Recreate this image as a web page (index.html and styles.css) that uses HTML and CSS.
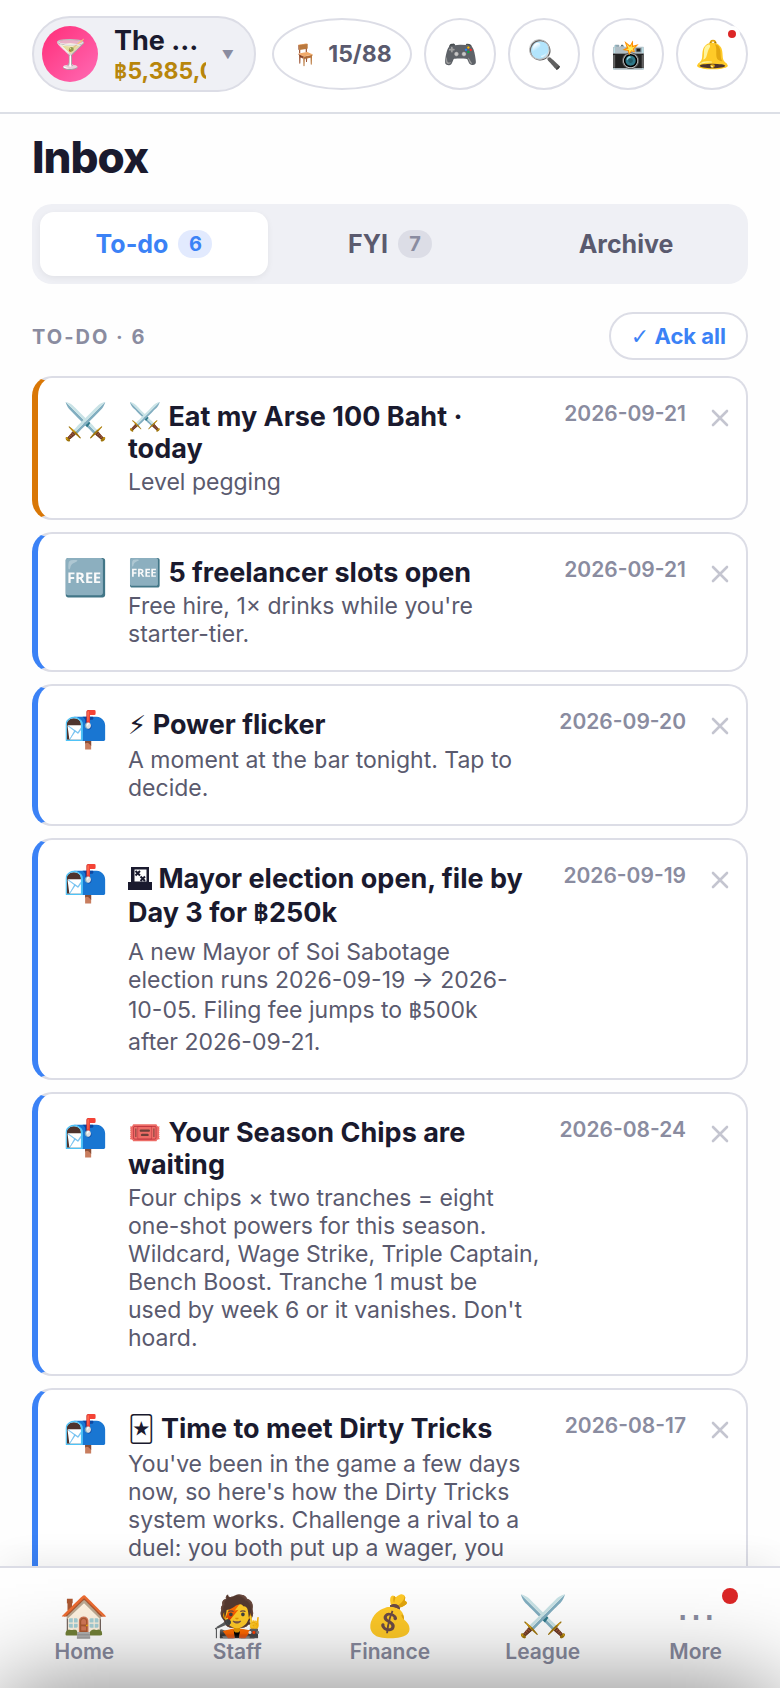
FILE: index.html
```html
<!DOCTYPE html>
<html lang="en">
<head>
<meta charset="utf-8">
<meta name="viewport" content="width=device-width, initial-scale=1">
<title>Inbox</title>
<link rel="stylesheet" href="styles.css">
</head>
<body>
<svg width="0" height="0" class="defs" aria-hidden="true">
  <symbol id="cross" viewBox="0 0 18 18"><path d="M2 2L16 16M16 2L2 16" fill="none" stroke="currentColor" stroke-width="2.6" stroke-linecap="round"/></symbol>
</svg>
<div class="app">
  <header class="topbar">
    <button class="profile" type="button">
      <span class="avatar">🍸</span>
      <span class="profile-text">
        <span class="profile-name">The Sabotage Bar</span>
        <span class="profile-cash"><span class="baht">฿</span>5,385,000</span>
      </span>
      <span class="caret">▼</span>
    </button>
    <div class="actions">
      <button class="pill seats" type="button"><span class="seat-icon">🪑</span>15/88</button>
      <button class="pill" type="button" aria-label="Games">🎮</button>
      <button class="pill" type="button" aria-label="Search">🔍</button>
      <button class="pill" type="button" aria-label="Camera">📸</button>
      <button class="pill" type="button" aria-label="Notifications">🔔<span class="bell-dot"></span></button>
    </div>
  </header>

  <main class="content">
    <h1 class="page-title">Inbox</h1>
    <div class="tabs" role="tablist">
      <button class="tab active" role="tab" aria-selected="true" type="button">To-do <span class="count">6</span></button>
      <button class="tab" role="tab" aria-selected="false" type="button">FYI <span class="count">7</span></button>
      <button class="tab" role="tab" aria-selected="false" type="button">Archive</button>
    </div>
    <div class="section-head">
      <h2 class="section-label">TO-DO · 6</h2>
      <button class="ack" type="button"><span class="tick">✓</span> Ack all</button>
    </div>

    <div class="cards">
      <article class="card urgent">
        <span class="card-icon">⚔️</span>
        <div class="card-main">
          <h3 class="card-title">⚔️ Eat my Arse 100 Baht ·<br>today</h3>
          <p class="card-body">Level pegging</p>
        </div>
        <time class="card-date">2026-09-21</time>
        <button class="close" type="button" aria-label="Dismiss"><svg><use href="#cross"/></svg></button>
      </article>
      <article class="card">
        <span class="card-icon">🆓</span>
        <div class="card-main">
          <h3 class="card-title">🆓 5 freelancer slots open</h3>
          <p class="card-body">Free hire, 1× drinks while you're starter-tier.</p>
        </div>
        <time class="card-date">2026-09-21</time>
        <button class="close" type="button" aria-label="Dismiss"><svg><use href="#cross"/></svg></button>
      </article>
      <article class="card">
        <span class="card-icon">📬</span>
        <div class="card-main">
          <h3 class="card-title"><span class="glyph">⚡</span> Power flicker</h3>
          <p class="card-body">A moment at the bar tonight. Tap to decide.</p>
        </div>
        <time class="card-date">2026-09-20</time>
        <button class="close" type="button" aria-label="Dismiss"><svg><use href="#cross"/></svg></button>
      </article>
      <article class="card">
        <span class="card-icon">📬</span>
        <div class="card-main">
          <h3 class="card-title"><svg class="ballot" viewBox="0 0 24 24" role="img" aria-label="Ballot box"><path d="M3 0H21V15H24V23H0V15H3ZM6.500 2.500V14.500H18.500V2.500Z" fill="currentColor" fill-rule="evenodd"/><path d="M7.500 4L12 8.500M12 4L7.500 8.500M12.500 9.500L17 14M17 9.500L12.500 14" fill="none" stroke="currentColor" stroke-width="2"/></svg> Mayor election open, file by Day 3 for <span class="money"><span class="baht">฿</span>250k</span></h3>
          <p class="card-body">A new Mayor of Soi Sabotage<br>election runs 2026-09-19 → 2026-<br>10-05. Filing fee jumps to <span class="money"><span class="baht">฿</span>500k</span><br>after 2026-09-21.</p>
        </div>
        <time class="card-date">2026-09-19</time>
        <button class="close" type="button" aria-label="Dismiss"><svg><use href="#cross"/></svg></button>
      </article>
      <article class="card">
        <span class="card-icon">📬</span>
        <div class="card-main">
          <h3 class="card-title">🎟️ Your Season Chips are waiting</h3>
          <p class="card-body">Four chips × two tranches = eight<br>one-shot powers for this season.<br>Wildcard, Wage Strike, Triple Captain,<br>Bench Boost. Tranche 1 must be<br>used by week 6 or it vanishes. Don't hoard.</p>
        </div>
        <time class="card-date">2026-08-24</time>
        <button class="close" type="button" aria-label="Dismiss"><svg><use href="#cross"/></svg></button>
      </article>
      <article class="card">
        <span class="card-icon">📬</span>
        <div class="card-main">
          <h3 class="card-title"><span class="glyph">🃏</span> Time to meet Dirty Tricks</h3>
          <p class="card-body">You've been in the game a few days now, so here's how the Dirty Tricks system works. Challenge a rival to a duel: you both put up a wager, you</p>
        </div>
        <time class="card-date">2026-08-17</time>
        <button class="close" type="button" aria-label="Dismiss"><svg><use href="#cross"/></svg></button>
      </article>
    </div>
  </main>

  <nav class="tabbar">
    <a class="nav-item" href="#home"><span class="nav-icon">🏠</span>Home</a>
    <a class="nav-item" href="#staff"><span class="nav-icon">🧑‍🎤</span>Staff</a>
    <a class="nav-item" href="#finance"><span class="nav-icon">💰</span>Finance</a>
    <a class="nav-item" href="#league"><span class="nav-icon">⚔️</span>League</a>
    <a class="nav-item" href="#more"><span class="nav-icon">⋯</span>More<span class="nav-dot"></span></a>
  </nav>
</div>
<div class="sheet-shadow"></div>
</body>
</html>
```

FILE: styles.css
```css
* { box-sizing: border-box; }

body {
  margin: 0;
  background: #fefefe;
  color: #1a1a2e;
  font-family: Inter, "Noto Sans", sans-serif;
  overflow: hidden;
}

button { font: inherit; color: inherit; cursor: pointer; }
h1, h2, h3, p { margin: 0; }
.defs { position: absolute; }

.app { display: flex; flex-direction: column; height: 100vh; }
.baht { font-family: "Noto Sans Thai", "Noto Sans", sans-serif; line-height: 1; }

/* Top bar */
.topbar {
  display: flex;
  align-items: center;
  justify-content: space-between;
  gap: 16px;
  padding: 16px 32px 20px;
  border-bottom: 2px solid #dcdfe6;
  background: #fff;
}
.profile {
  display: flex;
  align-items: center;
  width: 224px;
  height: 76px;
  padding: 0 20px 0 8px;
  border: 2px solid #dcdde6;
  border-radius: 38px;
  background: #eff0f5;
  text-align: left;
}
.avatar {
  display: flex;
  align-items: center;
  justify-content: center;
  flex: none;
  width: 56px;
  height: 56px;
  margin-right: 16px;
  border-radius: 50%;
  background: linear-gradient(135deg, #ff2d78, #ff6bb5);
  font-size: 28px;
}
.profile-text {
  display: flex;
  flex-direction: column;
  flex: 1;
  min-width: 0;
  padding-top: 2px;
}
.profile-name {
  overflow: hidden;
  font-size: 27px;
  font-weight: 700;
  line-height: 32px;
  text-overflow: ellipsis;
  white-space: nowrap;
}
.profile-cash {
  overflow: hidden;
  color: #b8860b;
  font-size: 23px;
  font-weight: 700;
  line-height: 28px;
  white-space: nowrap;
}
.caret { margin-left: 16px; padding-top: 2px; color: #8a8ca0; font-size: 12px; line-height: 20px; }

.actions { display: flex; gap: 12px; }
.pill {
  position: relative;
  display: flex;
  align-items: center;
  justify-content: center;
  width: 72px;
  height: 72px;
  padding: 0;
  border: 2px solid #dcdde6;
  border-radius: 50%;
  background: #fff;
  font-size: 28px;
}
.seats {
  width: 140px;
  gap: 10px;
  color: #5a5a6e;
  font-size: 23px;
  font-weight: 700;
}
.seat-icon { font-size: 21px; }
.bell-dot {
  position: absolute;
  top: 6px;
  right: 6px;
  width: 16px;
  height: 16px;
  border: 4px solid #fff;
  border-radius: 50%;
  background: #dc2626;
}

/* Content */
.content {
  flex: 1;
  min-height: 0;
  padding: 16px 32px 0;
  overflow: hidden;
}
.page-title { font-size: 44px; font-weight: 800; letter-spacing: -1px; line-height: 54px; }
.tabs {
  display: grid;
  grid-template-columns: repeat(3, 1fr);
  gap: 8px;
  margin-top: 20px;
  padding: 8px;
  border-radius: 20px;
  background: #eff0f5;
}
.tab {
  display: flex;
  align-items: center;
  justify-content: center;
  gap: 10px;
  height: 64px;
  padding: 0;
  border: 0;
  border-radius: 14px;
  background: none;
  color: #5a5a6e;
  font-size: 25px;
  font-weight: 700;
}
.tab.active {
  background: #fff;
  color: #3b82f6;
  box-shadow: 0 2px 6px rgba(0, 0, 0, 0.06);
}
.count {
  min-width: 34px;
  padding: 0 10px;
  border-radius: 14px;
  background: #dcdde6;
  color: #8a8ca0;
  font-size: 20px;
  line-height: 28px;
  text-align: center;
}
.active .count { background: #e2eafe; color: #3b82f6; }

.section-head {
  display: flex;
  align-items: center;
  justify-content: space-between;
  margin-top: 28px;
}
.section-label {
  padding-top: 2px;
  color: #8a8ca0;
  font-size: 20px;
  font-weight: 700;
  letter-spacing: 2px;
  line-height: 24px;
}
.ack {
  height: 48px;
  padding: 0 20px;
  border: 2px solid #dcdde6;
  border-radius: 24px;
  background: #fff;
  color: #3b82f6;
  font-size: 22px;
  font-weight: 700;
}
.tick { font-family: "DejaVu Sans", sans-serif; font-weight: 400; line-height: 1; }

/* Cards */
.cards { display: flex; flex-direction: column; gap: 12px; margin-top: 16px; }
.card {
  display: flex;
  align-items: flex-start;
  padding: 22px 8px 22px 24px;
  border: 2px solid #dcdde6;
  border-left: 6px solid #3b82f6;
  border-radius: 20px;
  background: #fff;
}
.card.urgent { border-left-color: #d97706; }
.card-icon {
  flex: none;
  width: 46px;
  margin-right: 20px;
  font-size: 36px;
  line-height: 42px;
  text-align: center;
}
.card-main { flex: 1; min-width: 0; padding-top: 1px; }
.card-title { font-size: 27px; font-weight: 700; line-height: 32px; }
.glyph { display: inline-block; padding-bottom: 2px; font-family: "DejaVu Sans", sans-serif; font-size: 26px; }
.ballot { width: 24px; height: 24px; vertical-align: -3px; }
.card-body { margin-top: 3px; color: #5a5a6e; font-size: 23px; line-height: 28px; }
.money { display: inline-block; padding: 2px 0 4px; }
.card-title .money { padding-bottom: 6px; }
.card-date {
  flex: 0 0 128px;
  margin-left: 14px;
  color: #8a8ca0;
  font-size: 21px;
  font-weight: 600;
  line-height: 28px;
  text-align: right;
}
.close {
  display: flex;
  align-items: center;
  justify-content: center;
  flex: none;
  width: 36px;
  height: 36px;
  margin-left: 16px;
  padding: 0;
  border: 0;
  background: none;
  color: #c4c5d0;
}
.close svg { width: 18px; height: 18px; }

/* Bottom navigation */
.tabbar {
  position: relative;
  display: grid;
  grid-template-columns: repeat(5, 1fr);
  height: 122px;
  padding: 24px 8px 0;
  border-top: 2px solid #dcdde6;
  background: #fff;
  box-shadow: 0 -4px 40px -8px rgba(0, 0, 0, 0.12);
}
.nav-item {
  position: relative;
  display: flex;
  flex-direction: column;
  align-items: center;
  color: #8a8ca0;
  font-size: 21px;
  font-weight: 600;
  line-height: 28px;
  text-decoration: none;
}
.nav-icon { height: 46px; font-size: 40px; font-weight: 400; line-height: 48px; }
.nav-dot {
  position: absolute;
  top: -4px;
  right: 34px;
  width: 16px;
  height: 16px;
  border-radius: 50%;
  background: #dc2626;
}

/* Shadow cast upwards by the closed sheet below the window */
.sheet-shadow {
  position: fixed;
  top: 100%;
  right: 0;
  left: 0;
  height: 600px;
  box-shadow: 0 0 96px rgba(0, 0, 0, 0.5);
  pointer-events: none;
}
```
